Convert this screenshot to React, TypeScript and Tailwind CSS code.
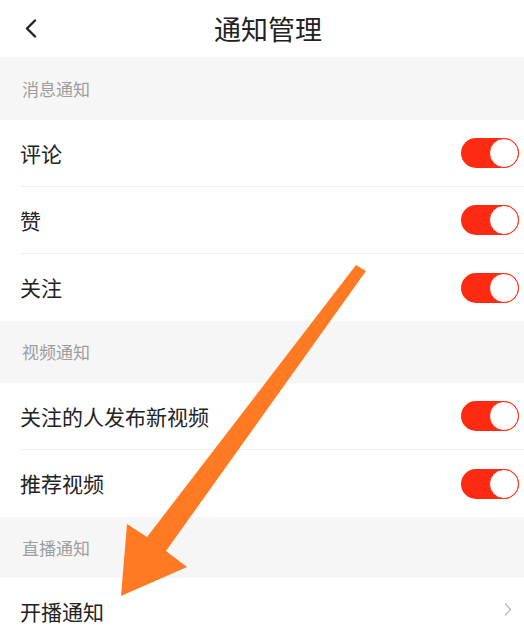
import React from 'react';

type Row = { label: string; toggle?: boolean };
type Section = { title: string; rows: Row[] };

const SECTIONS: Section[] = [
  { title: '消息通知', rows: [{ label: '评论', toggle: true }, { label: '赞', toggle: true }, { label: '关注', toggle: true }] },
  { title: '视频通知', rows: [{ label: '关注的人发布新视频', toggle: true }, { label: '推荐视频', toggle: true }] },
  { title: '直播通知', rows: [{ label: '开播通知' }] },
];

const Toggle: React.FC = () => (
  <div className="flex h-[30px] w-[58px] justify-end rounded-full bg-[#ff2a12]">
    <div className="h-[30px] w-[30px] rounded-full border border-[#ff2a12] bg-white" />
  </div>
);

const App: React.FC = () => {
  return (
    <div
      className="relative h-[632px] w-[524px] overflow-hidden bg-white text-[#222]"
      style={{ fontFamily: '"Noto Sans CJK SC", "Noto Sans", sans-serif' }}
    >
      {/* Header */}
      <div className="grid h-[57px] grid-cols-[1fr_auto_1fr] items-center">
        <div className="pl-[24px]">
          <svg width="13" height="19" viewBox="0 0 13 19" fill="none">
            <path d="M11 1.5 L3 9.5 L11 17.5" stroke="#222" strokeWidth="2.4" strokeLinecap="round" strokeLinejoin="round" />
          </svg>
        </div>
        <h1 className="pl-[12px] text-[27px] font-normal leading-none">通知管理</h1>
        <div />
      </div>

      {SECTIONS.map((section, si) => (
        <div key={section.title}>
          <div
            className={`flex items-center bg-[#f6f6f6] pl-[22px] text-[17px] text-[#9d9d9d] ${
              si === 0 ? 'h-[63px]' : si === 2 ? 'h-[61px]' : 'h-[62px]'
            }`}
          >
            {section.title}
          </div>
          {section.rows.map((row, ri) => (
            <div
              key={row.label}
              className={`ml-5 flex h-[67px] items-center justify-between pr-[5px] ${ri < section.rows.length - 1 ? 'border-b border-[#efefef]' : ''}`}
            >
              <span className="text-[21px] leading-none">{row.label}</span>
              {row.toggle ? (
                <Toggle />
              ) : (
                <svg width="8" height="13" viewBox="0 0 8 13" fill="none" className="mr-[7px] mt-[-4px]">
                  <path d="M1.5 1 L6.5 6.5 L1.5 12" stroke="#bbb" strokeWidth="1.4" strokeLinecap="round" strokeLinejoin="round" />
                </svg>
              )}
            </div>
          ))}
        </div>
      ))}

      {/* Annotation arrow overlay */}
      <svg className="pointer-events-none absolute inset-0" width="524" height="632" viewBox="0 0 524 632">
        <polygon points="356,265 366,271 166,551 187,567 121,596 127,524 147,537" fill="#ff7a22" />
      </svg>
    </div>
  );
};

export default App;
